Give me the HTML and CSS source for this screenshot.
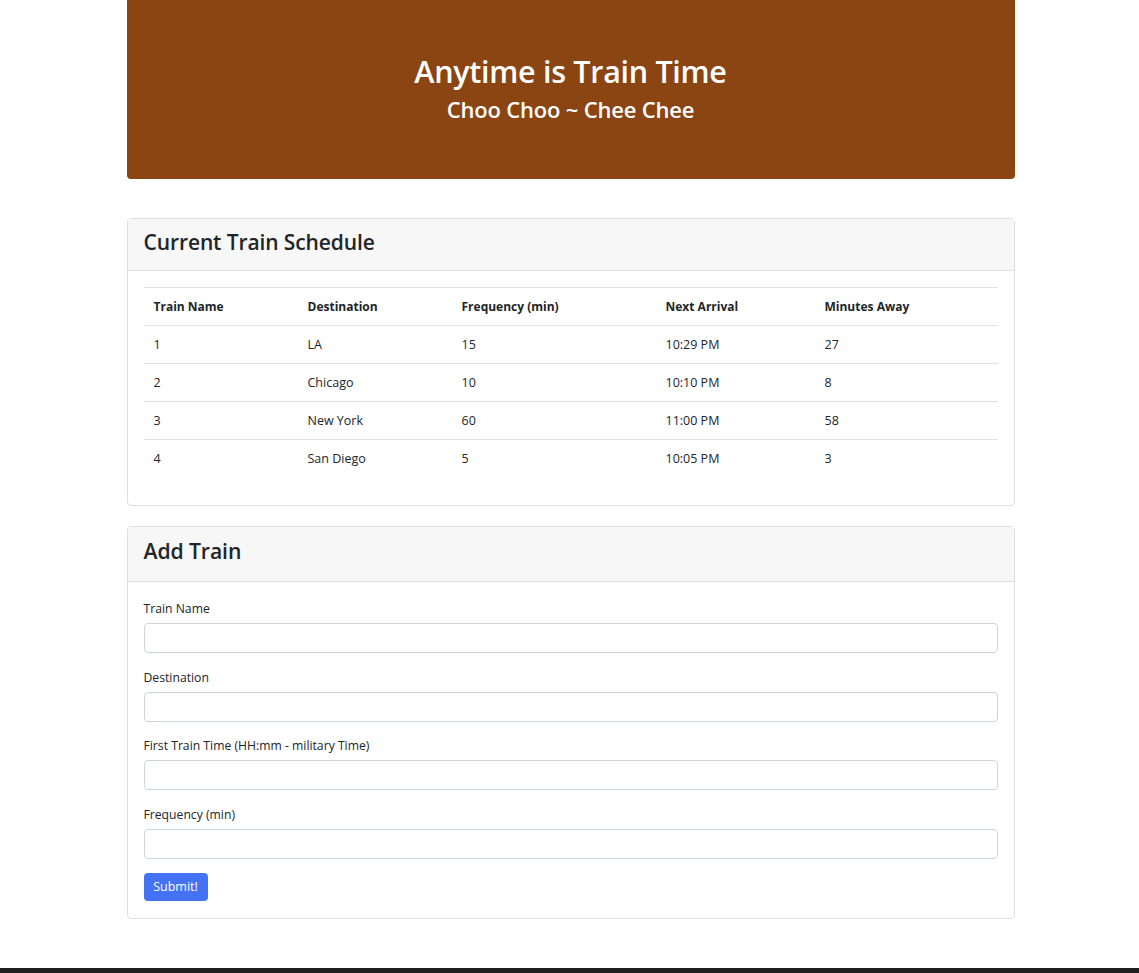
FILE: index.html
```html
<!DOCTYPE html>
<html lang="en">
<head>
<meta charset="utf-8">
<title>Anytime is Train Time</title>
<link rel="stylesheet" href="styles.css">
</head>
<body>
<div class="container">
  <header class="jumbotron">
    <h1 class="title">Anytime is Train Time</h1>
    <h2 class="subtitle">Choo Choo ~ Chee Chee</h2>
  </header>

  <section class="card card-schedule">
    <div class="card-header"><h3 class="card-title">Current Train Schedule</h3></div>
    <div class="card-body">
      <table class="table">
        <thead>
          <tr>
            <th class="c1">Train Name</th>
            <th class="c2">Destination</th>
            <th class="c3">Frequency (min)</th>
            <th class="c4">Next Arrival</th>
            <th class="c5">Minutes Away</th>
          </tr>
        </thead>
        <tbody>
          <tr><td>1</td><td>LA</td><td>15</td><td>10:29 PM</td><td>27</td></tr>
          <tr><td>2</td><td>Chicago</td><td>10</td><td>10:10 PM</td><td>8</td></tr>
          <tr><td>3</td><td>New York</td><td>60</td><td>11:00 PM</td><td>58</td></tr>
          <tr><td>4</td><td>San Diego</td><td>5</td><td>10:05 PM</td><td>3</td></tr>
        </tbody>
      </table>
    </div>
  </section>

  <section class="card card-add">
    <div class="card-header"><h2 class="card-title large">Add Train</h2></div>
    <div class="card-body">
      <form class="form">
        <div class="form-group">
          <label for="name">Train Name</label>
          <input id="name" class="form-control" type="text">
        </div>
        <div class="form-group">
          <label for="dest">Destination</label>
          <input id="dest" class="form-control" type="text">
        </div>
        <div class="form-group">
          <label for="first">First Train Time (HH:mm - military Time)</label>
          <input id="first" class="form-control" type="text">
        </div>
        <div class="form-group">
          <label for="freq">Frequency (min)</label>
          <input id="freq" class="form-control" type="text">
        </div>
        <button type="button" class="btn">Submit!</button>
      </form>
    </div>
  </section>
</div>
<footer class="footer"></footer>
</body>
</html>
```

FILE: styles.css
```css
* { box-sizing: border-box; }

html, body {
  margin: 0;
  padding: 0;
}

body {
  font-family: "Open Sans", "Noto Sans", sans-serif;
  color: #212529;
  background: #fff;
  font-size: 13px;
  line-height: 1.5;
}

.container {
  width: 888px;
  margin: 0 auto;
  position: relative;
  left: 1px;
}

.jumbotron {
  background: #8b4513;
  border-radius: 0 0 4px 4px;
  height: 179px;
  display: flex;
  flex-direction: column;
  align-items: center;
  padding-top: 49px;
  color: #fff;
}

.title {
  margin: 0;
  font-size: 30.5px;
  font-weight: 600;
  line-height: 44px;
  letter-spacing: -0.3px;
}

.subtitle {
  margin: 0;
  font-size: 22px;
  font-weight: 600;
  line-height: 32px;
  letter-spacing: -0.2px;
}

.card {
  border: 1px solid #dfdfdf;
  border-radius: 4px;
  background: #fff;
}

.card-schedule { margin-top: 39px; }
.card-add { margin-top: 20px; }

.card-header {
  background: #f7f7f7;
  border-bottom: 1px solid #dfdfdf;
  padding: 0 16px;
  display: flex;
  align-items: center;
}

.card-schedule .card-header { height: 52px; padding-bottom: 4px; }
.card-add .card-header { height: 55px; padding-bottom: 7px; }

.card-title {
  margin: 0;
  font-size: 21px;
  font-weight: 600;
  color: #212529;
  line-height: 1.2;
  letter-spacing: -0.1px;
}

.card-title.large { font-size: 21.2px; }

.card-body { padding: 17px 16px 16px; }

.card-schedule .card-body { padding: 16px 16px 28px; }

.table {
  width: 100%;
  border-collapse: collapse;
  table-layout: fixed;
}

.table th, .table td {
  text-align: left;
  padding: 9px 10px;
  line-height: 19px;
  border-top: 1px solid #dee2e6;
  font-size: 12.5px;
}

.table th {
  font-weight: 700;
  font-size: 12px;
  line-height: 20px;
  border-bottom: 1px solid #dee2e6;
  padding: 9px 10px 8px;
}

.table tbody tr:first-child td { border-top: 0; }

.c1 { width: 154px; }
.c2 { width: 154px; }
.c3 { width: 204px; }
.c4 { width: 159px; }
.c5 { width: 183px; }

.form-group {
  display: flex;
  flex-direction: column;
  margin-bottom: 14.7px;
}

.form-group:last-of-type { margin-bottom: 13.7px; }

.form-group label {
  font-size: 12.2px;
  line-height: 19px;
  margin-bottom: 5px;
}

.form-control {
  height: 30px;
  width: 100%;
  border: 1px solid #ced4da;
  border-radius: 4px;
  background: #fff;
  font: inherit;
  padding: 4px 8px;
}

.btn {
  display: block;
  width: 64px;
  height: 28px;
  border: 0;
  border-radius: 4px;
  background: #4472f5;
  color: #fff;
  font-family: inherit;
  font-size: 12.5px;
  padding: 0;
  margin-bottom: 1px;
  cursor: pointer;
}

.footer {
  margin-top: 49px;
  height: 40px;
  background: #1e1e1e;
}
```
